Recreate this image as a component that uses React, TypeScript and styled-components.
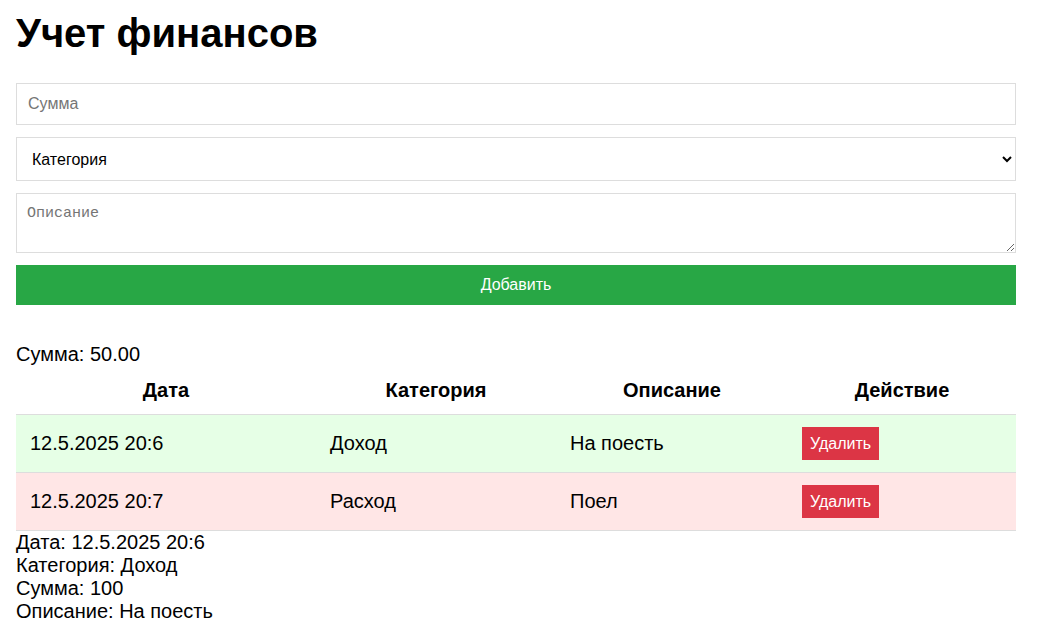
import * as React from "react";
import styled, { createGlobalStyle } from "styled-components";

interface TTransaction {
  id: number;
  date: string;
  category: "Доход" | "Расход";
  amount: number;
  description: string;
}

const transactions: TTransaction[] = [
  { id: 1, date: "12.5.2025 20:6", category: "Доход", amount: 100, description: "На поесть" },
  { id: 2, date: "12.5.2025 20:7", category: "Расход", amount: 50, description: "Поел" },
];

const columns = [
  { title: "Дата", width: 300 },
  { title: "Категория", width: 240 },
  { title: "Описание", width: 232 },
  { title: "Действие", width: 228 },
];

const GlobalStyle = createGlobalStyle`
  body {
    margin: 0;
    background: #fff;
    color: #000;
    font-family: "Liberation Sans", Arial, sans-serif;
    font-size: 20px;
  }
`;

const App: React.FunctionComponent = () => {
  const [selected] = React.useState<TTransaction>(transactions[0]);
  const total = transactions.reduce(
    (acc, t) => (t.category === "Доход" ? acc + t.amount : acc - t.amount),
    0,
  );

  return (
    <>
      <GlobalStyle />
      <Container>
        <Title>Учет финансов</Title>
        <Form onSubmit={(e) => e.preventDefault()}>
          <Input type="number" placeholder="Сумма" />
          <Select defaultValue="">
            <option value="">Категория</option>
            <option value="income">Доход</option>
            <option value="expense">Расход</option>
          </Select>
          <TextArea placeholder="Описание" />
          <AddButton type="submit">Добавить</AddButton>
        </Form>

        <Total>Сумма: {total.toFixed(2)}</Total>
        <Table>
          <thead>
            <tr>
              {columns.map((col) => (
                <HeadCell key={col.title} $width={col.width}>
                  {col.title}
                </HeadCell>
              ))}
            </tr>
          </thead>
          <tbody>
            {transactions.map((t) => (
              <Row key={t.id} $isIncome={t.category === "Доход"}>
                <Cell>{t.date}</Cell>
                <Cell>{t.category}</Cell>
                <Cell>{t.description}</Cell>
                <Cell>
                  <DeleteButton>Удалить</DeleteButton>
                </Cell>
              </Row>
            ))}
          </tbody>
        </Table>

        <Details>
          <div>Дата: {selected.date}</div>
          <div>Категория: {selected.category}</div>
          <div>Сумма: {selected.amount}</div>
          <div>Описание: {selected.description}</div>
        </Details>
      </Container>
    </>
  );
};

const Container = styled.div`
  max-width: 1000px;
  padding: 10px 16px;
`;

const Title = styled.h1`
  margin: 0 0 27px;
  font-size: 40px;
  font-weight: bold;
  line-height: 46px;
`;

const Form = styled.form`
  display: flex;
  flex-direction: column;
  gap: 12px;
`;

const fieldBase = `
  box-sizing: border-box;
  width: 100%;
  margin: 0;
  border: 1px solid #ddd;
  border-radius: 0;
  background: #fff;
  outline: none;
`;

const Input = styled.input`
  ${fieldBase}
  height: 42px;
  padding: 10px 11px;
  font-family: "Liberation Sans", Arial, sans-serif;
  font-size: 16px;
  &::placeholder {
    color: #757575;
  }
  &::-webkit-inner-spin-button {
    display: none;
  }
`;

const Select = styled.select`
  ${fieldBase}
  height: 44px;
  padding: 10px 11px;
  color: #000;
  font-family: "Liberation Sans", Arial, sans-serif;
  font-size: 16px;
`;

const TextArea = styled.textarea`
  ${fieldBase}
  height: 60px;
  padding: 11px 10px;
  font-family: "Liberation Mono", "DejaVu Sans Mono", monospace;
  font-size: 15px;
  resize: vertical;
  &::placeholder {
    color: #757575;
  }
`;

const AddButton = styled.button`
  height: 40px;
  border: none;
  border-radius: 0;
  background: #28a745;
  color: #fff;
  font-family: "Liberation Sans", Arial, sans-serif;
  font-size: 16px;
  cursor: pointer;
`;

const Total = styled.div`
  margin-top: 38px;
  line-height: 23px;
`;

const Table = styled.table`
  width: 100%;
  border-collapse: collapse;
  table-layout: fixed;
`;

const HeadCell = styled.th<{ $width: number }>`
  box-sizing: border-box;
  width: ${(p) => p.$width}px;
  padding: 12px 14px;
  border-bottom: 1px solid #ddd;
  font-weight: bold;
  text-align: center;
  line-height: 24px;
`;

const Row = styled.tr<{ $isIncome: boolean }>`
  background: ${(p) => (p.$isIncome ? "#e6ffe6" : "#ffe6e6")};
`;

const Cell = styled.td`
  padding: 12px 13px 12px 14px;
  border-bottom: 1px solid #ddd;
  text-align: left;
  line-height: 23px;
  vertical-align: middle;
`;

const DeleteButton = styled.button`
  display: block;
  padding: 7px 8px;
  border: none;
  border-radius: 0;
  background: #dc3545;
  color: #fff;
  font-family: "Liberation Sans", Arial, sans-serif;
  font-size: 16px;
  line-height: 19px;
  cursor: pointer;
`;

const Details = styled.div`
  line-height: 23px;
`;

export default App;
